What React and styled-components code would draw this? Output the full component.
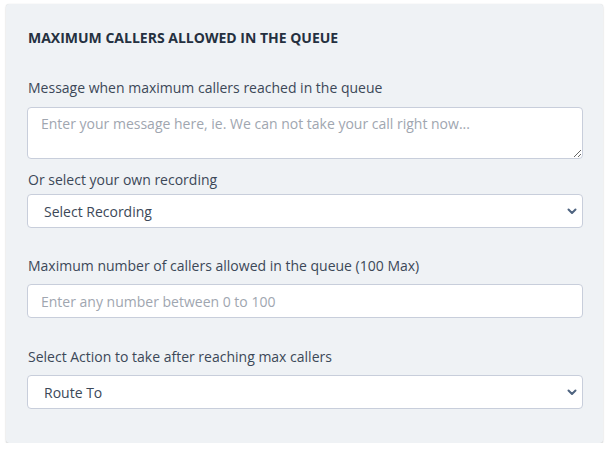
import React from "react";
import styled, { createGlobalStyle } from "styled-components";

const Global = createGlobalStyle`
  html, body { margin: 0; padding: 0; background: #ffffff; }
  body { font-family: "Open Sans", "Noto Sans", sans-serif; }
  * { box-sizing: border-box; }
`;

const Page = styled.div`
  padding: 4px 7px 0 6px;
`;

const Card = styled.section`
  width: 597px;
  height: 439px;
  background: #eff2f5;
  border-radius: 3px;
  box-shadow: 0 1px 2px rgba(0, 0, 0, 0.18), 0 0 1px rgba(0, 0, 0, 0.12);
  padding: 24px 20px 0 21px;
  display: flex;
  flex-direction: column;
`;

const Heading = styled.h3`
  margin: 0 0 30px 1px;
  font-size: 14px;
  font-weight: 700;
  line-height: 20px;
  color: #253040;
  letter-spacing: 0;
`;

const Label = styled.label`
  display: block;
  font-size: 14px;
  line-height: 20px;
  color: #3c4858;
  margin-top: ${(p) => p.$mt || 0}px;
  margin-bottom: ${(p) => p.$mb || 8}px;
  margin-left: 1px;
`;

const fieldBase = `
  display: block;
  width: 556px;
  background: #ffffff;
  border: 1px solid #c8cedb;
  border-radius: 4px;
  font-family: "Open Sans", "Noto Sans", sans-serif;
  font-size: 14px;
  color: #3c4858;
  outline: none;
`;

const TextArea = styled.textarea`
  ${fieldBase}
  height: 52px;
  padding: 6px 13px;
  line-height: 20px;
  resize: vertical;
  &::placeholder { color: #a0a6b0; }
`;

const Input = styled.input`
  ${fieldBase}
  height: 34px;
  padding: 0 13px;
  &::placeholder { color: #a0a6b0; }
`;

const SelectWrap = styled.div`
  position: relative;
  width: 556px;
`;

const Select = styled.select`
  ${fieldBase}
  height: 34px;
  padding: 0 30px 0 16px;
  appearance: none;
  -webkit-appearance: none;
`;

const Chevron = styled.svg`
  position: absolute;
  right: 5px;
  top: 50%;
  transform: translateY(-50%);
  pointer-events: none;
`;

function Dropdown({ value }) {
  return (
    <SelectWrap>
      <Select defaultValue={value}>
        <option>{value}</option>
      </Select>
      <Chevron width="12" height="12" viewBox="0 0 12 12">
        <path d="M2.5 4.5 L6 8 L9.5 4.5" fill="none" stroke="#4f6480" strokeWidth="2" strokeLinecap="round" strokeLinejoin="round" />
      </Chevron>
    </SelectWrap>
  );
}

export default function App() {
  return (
    <>
      <Global />
      <Page>
        <Card>
          <Heading>MAXIMUM CALLERS ALLOWED IN THE QUEUE</Heading>
          <Label $mb={9}>Message when maximum callers reached in the queue</Label>
          <TextArea placeholder="Enter your message here, ie. We can not take your call right now..." />
          <Label $mt={11} $mb={4}>Or select your own recording</Label>
          <Dropdown value="Select Recording" />
          <Label $mt={28} $mb={8}>Maximum number of callers allowed in the queue (100 Max)</Label>
          <Input placeholder="Enter any number between 0 to 100" />
          <Label $mt={29} $mb={8}>Select Action to take after reaching max callers</Label>
          <Dropdown value="Route To" />
        </Card>
      </Page>
    </>
  );
}
